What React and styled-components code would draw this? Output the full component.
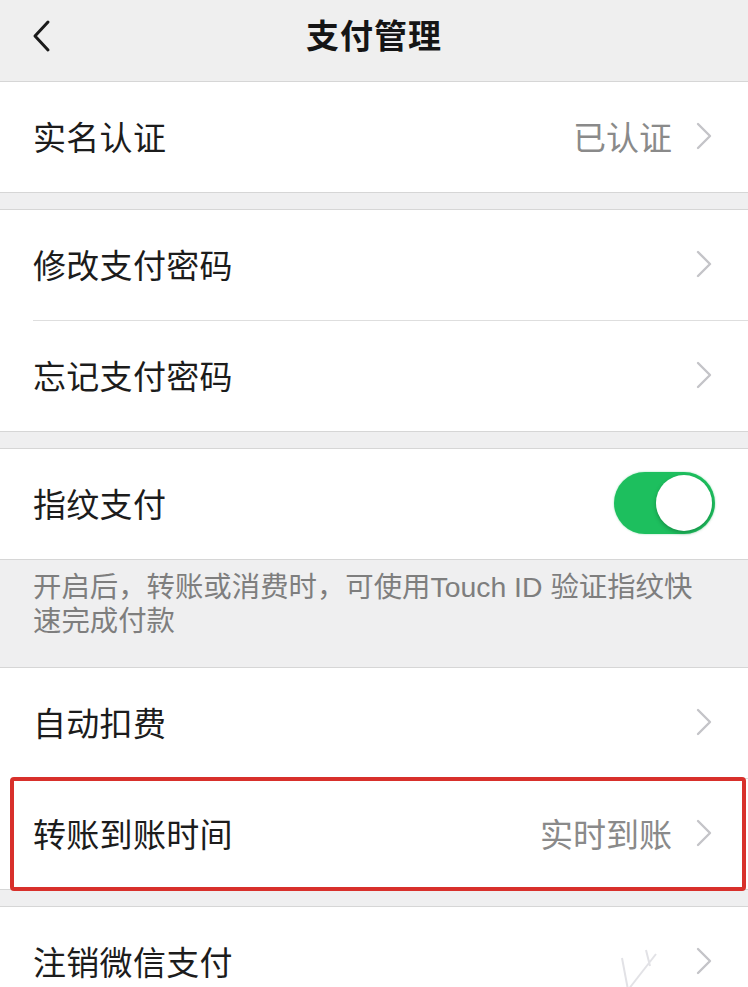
import styled, { createGlobalStyle } from 'styled-components'

const GlobalStyle = createGlobalStyle`
  html, body {
    margin: 0;
    padding: 0;
    background: #efeff0;
  }
  body {
    font-family: "Noto Sans CJK SC", "Noto Sans", sans-serif;
    -webkit-font-smoothing: antialiased;
  }
`

const Page = styled.div`
  width: 748px;
  min-height: 987px;
  background: #efeff0;
  overflow: hidden;
`

const NavBar = styled.header`
  height: 81px;
  display: flex;
  align-items: center;
  justify-content: center;
  position: relative;
  background: #efefef;
  border-bottom: 1px solid #d6d6d6;
`

const BackButton = styled.button`
  position: absolute;
  left: 30px;
  top: 18px;
  width: 24px;
  height: 36px;
  padding: 0;
  border: 0;
  background: none;
  display: flex;
  align-items: center;
`

const Title = styled.h1`
  margin: 0 0 14px;
  font-size: 33px;
  font-weight: 700;
  color: #151515;
  letter-spacing: 1px;
`

const Group = styled.section`
  background: #fff;
  border-top: ${(p) => (p.$noTop ? 'none' : '1px solid #d6d6d6')};
  border-bottom: 1px solid #d6d6d6;
  margin-top: ${(p) => p.$gap || 0}px;
`

const Row = styled.div`
  position: relative;
  height: 107px;
  display: flex;
  align-items: center;
  padding: 0 33px 3px;
  & + & {
    border-top: 1px solid #dedede;
    margin-left: 33px;
    padding-left: 0;
  }
`

const Label = styled.span`
  flex: 1;
  font-size: 33px;
  color: #1c1c1c;
  letter-spacing: 0.3px;
`

const Value = styled.span`
  font-size: 33px;
  color: #8a8a8a;
  margin-right: 24px;
`

const Chevron = styled.svg`
  width: 16px;
  height: 28px;
  margin-right: 3px;
`

const Note = styled.p`
  margin: 0;
  padding: 10px 40px 29px 33px;
  font-family: "Liberation Sans", "Noto Sans CJK SC", sans-serif;
  font-size: 28.4px;
  line-height: 34px;
  color: #7e7e7e;
`

const Toggle = styled.div`
  width: 101px;
  height: 62px;
  border-radius: 31px;
  background: #1dbf5e;
  position: relative;
  box-shadow: 0 0 2px rgba(30, 190, 90, 0.5);
`

const Knob = styled.div`
  position: absolute;
  right: 3px;
  top: 3px;
  width: 56px;
  height: 56px;
  border-radius: 50%;
  background: #fff;
  box-shadow: 0 2px 4px rgba(0, 0, 0, 0.25);
`

const Highlight = styled.div`
  position: absolute;
  left: -23px;
  right: 2px;
  top: -2px;
  bottom: -2px;
  border: 4px solid #d8302b;
  border-radius: 4px;
  pointer-events: none;
`

const Mark = styled.svg`
  width: 50px;
  height: 50px;
  margin-right: 30px;
  margin-top: 20px;
`

const Arrow = () => (
  <Chevron viewBox="0 0 16 28">
    <path d="M2 2 L14 14 L2 26" fill="none" stroke="#c4c4c8" strokeWidth="2.4" strokeLinecap="round" strokeLinejoin="round" />
  </Chevron>
)

const Item = ({ label, value, children, highlight }) => (
  <Row>
    <Label>{label}</Label>
    {value && <Value>{value}</Value>}
    {children || <Arrow />}
    {highlight && <Highlight />}
  </Row>
)

export default function App() {
  return (
    <Page>
      <GlobalStyle />
      <NavBar>
        <BackButton aria-label="back">
          <svg width="22" height="34" viewBox="0 0 22 34">
            <path d="M18 3 L5 17 L18 31" fill="none" stroke="#1a1a1a" strokeWidth="3" strokeLinecap="round" strokeLinejoin="round" />
          </svg>
        </BackButton>
        <Title>支付管理</Title>
      </NavBar>

      <Group $noTop>
        <Item label="实名认证" value="已认证" />
      </Group>

      <Group $gap={16}>
        <Item label="修改支付密码" />
        <Item label="忘记支付密码" />
      </Group>

      <Group $gap={16}>
        <Item label="指纹支付">
          <Toggle>
            <Knob />
          </Toggle>
        </Item>
      </Group>
      <Note>开启后，转账或消费时，可使用Touch ID 验证指纹快速完成付款</Note>

      <Group>
        <Item label="自动扣费" />
        <Item label="转账到账时间" value="实时到账" highlight />
      </Group>

      <Group $gap={16}>
        <Item label="注销微信支付">
          <Mark viewBox="0 0 50 50">
            <path d="M6 12 L12 44 L40 8 M30 4 L34 20 M20 46 L46 46" fill="none" stroke="#e2e2e6" strokeWidth="2" />
          </Mark>
          <Arrow />
        </Item>
      </Group>
    </Page>
  )
}
